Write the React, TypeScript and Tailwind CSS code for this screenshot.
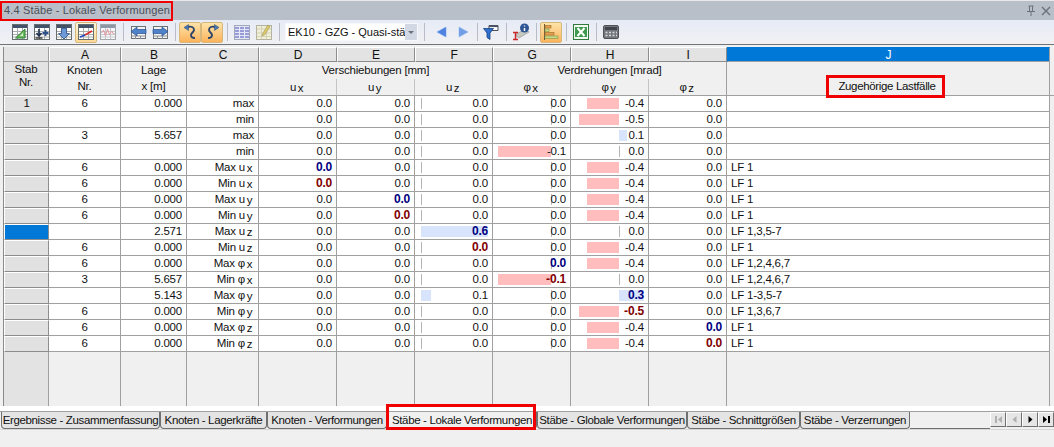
import React from 'react';

const cols =
  'grid grid-cols-[45px_72px_66px_72px_78px_78px_78px_78px_78px_78px_323px]';
const line = 'border-r border-b border-[#a0a0a0]';

type Sym = { base: string; sub: string };
type Val = { v: string; hi?: 'max' | 'min'; bar?: [number, number] };

interface Row {
  stab?: string;
  node?: string;
  x?: string;
  label: string;
  sym?: Sym;
  vals: Partial<Record<'d' | 'e' | 'f' | 'g' | 'h' | 'i', Val>>;
  lf?: string;
  selected?: boolean;
}

// bar = [left, width] in px inside the cell, zero ticks stay where the bar starts
const h4: Val = { v: '-0.4', bar: [16, 32] };
const row = (r: Partial<Row> & { label: string }): Row => ({ vals: {}, ...r });

const rows: Row[] = [
  row({ stab: '1', node: '6', x: '0.000', label: 'max', vals: { h: h4 } }),
  row({ label: 'min', vals: { h: { v: '-0.5', bar: [8, 40] } } }),
  row({ node: '3', x: '5.657', label: 'max', vals: { h: { v: '0.1', bar: [48, 8] } } }),
  row({ label: 'min', vals: { g: { v: '-0.1', bar: [5, 53] } } }),
  row({ node: '6', x: '0.000', label: 'Max', sym: { base: 'u', sub: 'x' }, vals: { d: { v: '0.0', hi: 'max' }, h: h4 }, lf: 'LF 1' }),
  row({ node: '6', x: '0.000', label: 'Min', sym: { base: 'u', sub: 'x' }, vals: { d: { v: '0.0', hi: 'min' }, h: h4 }, lf: 'LF 1' }),
  row({ node: '6', x: '0.000', label: 'Max', sym: { base: 'u', sub: 'y' }, vals: { e: { v: '0.0', hi: 'max' }, h: h4 }, lf: 'LF 1' }),
  row({ node: '6', x: '0.000', label: 'Min', sym: { base: 'u', sub: 'y' }, vals: { e: { v: '0.0', hi: 'min' }, h: h4 }, lf: 'LF 1' }),
  row({ x: '2.571', label: 'Max', sym: { base: 'u', sub: 'z' }, vals: { f: { v: '0.6', hi: 'max', bar: [6, 67] } }, lf: 'LF 1,3,5-7', selected: true }),
  row({ node: '6', x: '0.000', label: 'Min', sym: { base: 'u', sub: 'z' }, vals: { f: { v: '0.0', hi: 'min' }, h: h4 }, lf: 'LF 1' }),
  row({ node: '6', x: '0.000', label: 'Max', sym: { base: 'φ', sub: 'x' }, vals: { g: { v: '0.0', hi: 'max' }, h: h4 }, lf: 'LF 1,2,4,6,7' }),
  row({ node: '3', x: '5.657', label: 'Min', sym: { base: 'φ', sub: 'x' }, vals: { g: { v: '-0.1', hi: 'min', bar: [5, 53] } }, lf: 'LF 1,2,4,6,7' }),
  row({ x: '5.143', label: 'Max', sym: { base: 'φ', sub: 'y' }, vals: { f: { v: '0.1', bar: [6, 10] }, h: { v: '0.3', hi: 'max', bar: [48, 25] } }, lf: 'LF 1-3,5-7' }),
  row({ node: '6', x: '0.000', label: 'Min', sym: { base: 'φ', sub: 'y' }, vals: { h: { v: '-0.5', hi: 'min', bar: [8, 40] } }, lf: 'LF 1,3,6,7' }),
  row({ node: '6', x: '0.000', label: 'Max', sym: { base: 'φ', sub: 'z' }, vals: { h: h4, i: { v: '0.0', hi: 'max' } }, lf: 'LF 1' }),
  row({ node: '6', x: '0.000', label: 'Min', sym: { base: 'φ', sub: 'z' }, vals: { h: h4, i: { v: '0.0', hi: 'min' } }, lf: 'LF 1' }),
];

const tickAt: Record<string, number> = { f: 6, g: 58, h: 48 };

function SymText({ s }: { s: Sym }) {
  return (
    <span className="tracking-[1.5px]">
      {s.base}
      <span className="align-[-1px]">{s.sub}</span>
    </span>
  );
}

function NumCell({ id, val }: { id: 'd' | 'e' | 'f' | 'g' | 'h' | 'i'; val?: Val }) {
  const v = val ?? { v: '0.0' };
  const tick = tickAt[id];
  const neg = v.v.startsWith('-');
  return (
    <div className={`relative h-4 bg-white pr-[4px] text-right leading-[15px] ${line}`}>
      {v.bar ? (
        <span
          className={`absolute top-[2px] h-[11px] ${neg ? 'bg-[#ffbdbd]' : 'bg-[#d8e4fc]'}`}
          style={{ left: v.bar[0], width: v.bar[1] }}
        />
      ) : (
        tick !== undefined && (
          <span className="absolute top-[2px] h-[11px] w-px bg-[#b4b4b4]" style={{ left: tick }} />
        )
      )}
      <span
        className={`relative ${
          v.hi === 'max'
            ? 'text-[12px] font-bold text-[#000080]'
            : v.hi === 'min'
              ? 'text-[12px] font-bold text-[#800000]'
              : ''
        }`}
      >
        {v.v}
      </span>
    </div>
  );
}

function Letter({ ch, active }: { ch: string; active?: boolean }) {
  return (
    <div
      className={`h-[15px] border text-center text-[12px] leading-[14px] ${
        active
          ? 'border-[#0078d7] border-r-[#a0a0a0] border-b-[#a0a0a0] bg-[#0078d7] text-white'
          : 'border-t-white border-l-white border-r-[#8c8c8c] border-b-[#8c8c8c] bg-[#e3e3e3]'
      }`}
    >
      {ch}
    </div>
  );
}

function Btn({ children, active, soft }: { children: React.ReactNode; active?: boolean; soft?: boolean }) {
  return (
    <div
      className={`flex h-[21px] w-[22px] shrink-0 items-center justify-center rounded-[2px] ${
        active
          ? `border border-[#d8b77a] bg-linear-to-b ${soft ? 'from-[#fff6dc] to-[#fed896]' : 'from-[#fde3a8] to-[#fbb35a]'}`
          : ''
      }`}
    >
      {children}
    </div>
  );
}

function Sep({ w = 8 }: { w?: number }) {
  return (
    <div className="flex h-[18px] shrink-0 justify-center" style={{ width: w }}>
      <div className="h-full w-px bg-[#b7bcc6]" />
    </div>
  );
}

function Sheet({ children, tint = '#ffffff', faded }: { children?: React.ReactNode; tint?: string; faded?: boolean }) {
  return (
    <svg width="16" height="16" viewBox="0 0 16 16" opacity={faded ? 0.55 : 1}>
      <rect x="0.5" y="0.5" width="15" height="15" fill={tint} stroke="#666d6d" />
      <rect x="1" y="1" width="14" height="3" fill="#44516a" />
      <path d="M1 7.5h14M1 10.5h14M1 13h14M5.5 4v11M10.5 4v11" stroke="#a9adad" strokeWidth="1" />
      {children}
    </svg>
  );
}

function MoveIcon({ flip }: { flip?: boolean }) {
  return (
    <svg width="17" height="15" viewBox="0 0 17 15">
      <rect x="1.5" y="1.5" width="14" height="12" fill="#f3f3f3" stroke="#6e7274" />
      <path d="M1 11h15M5.5 11v3M10.5 11v3" stroke="#8a8e90" />
      <path
        d={flip ? 'M1 4.5h9V2l6 4.5L10 11V8.5H1z' : 'M16 4.5H7V2L1 6.5 7 11V8.5h9z'}
        fill="#4f82c9"
        stroke="#27508f"
        strokeWidth="0.7"
      />
    </svg>
  );
}

function CurveIcon({ flip }: { flip?: boolean }) {
  return (
    <svg width="15" height="18" viewBox="0 0 15 18" style={flip ? { transform: 'scaleX(-1)' } : undefined}>
      <path d="M5 4c3-1 6 0 6 3 0 2-3 3-3 5 0 2 2 3 4 3" fill="none" stroke="#2f4668" strokeWidth="1.9" />
      <path d="M1 4.500l4.500-3v6z" fill="#4678b8" stroke="#2f4668" strokeWidth="0.5" />
    </svg>
  );
}

function Toolbar() {
  return (
    <div className="flex h-[25px] items-center border-b border-[#70757c] bg-linear-to-b from-[#e6ebf6] to-[#f1f1f3] pl-[9px]">
      <Btn>
        <Sheet>
          <path d="M3.5 14L13 5v9z" fill="#6fbf5e" stroke="#2f7d34" />
          <path d="M8 12l3-3v3z" fill="#d9efd3" />
        </Sheet>
      </Btn>
      <Btn>
        <Sheet>
          <path d="M5 5v6M2.5 9L5 12l2.5-3" fill="none" stroke="#20314e" strokeWidth="1.6" />
          <path d="M1.5 14h7" stroke="#111" strokeWidth="1.2" />
          <path d="M11.5 6v6M8.5 9h6" stroke="#2a4f8a" strokeWidth="1.8" />
        </Sheet>
      </Btn>
      <Btn>
        <Sheet>
          <path d="M5.5 4.5h5v5h3L8 15 2.5 9.5h3z" fill="#6d9ad6" stroke="#2c4f85" strokeWidth="0.8" />
        </Sheet>
      </Btn>
      <Btn active soft>
        <Sheet>
          <path d="M2 13l5-2" stroke="#2246c2" strokeWidth="1.6" />
          <path d="M7 11l7-4" stroke="#d92b2b" strokeWidth="1.6" />
        </Sheet>
      </Btn>
      <Btn>
        <Sheet faded>
          <path d="M1.5 9l2-3 2 6 2-7 2 6 2-4 2 3 1-1" fill="none" stroke="#e0565b" strokeWidth="1" />
        </Sheet>
      </Btn>
      <Sep />
      <Btn>
        <MoveIcon />
      </Btn>
      <Btn>
        <MoveIcon flip />
      </Btn>
      <Sep />
      <Btn active>
        <CurveIcon />
      </Btn>
      <Btn active>
        <CurveIcon flip />
      </Btn>
      <Sep />
      <Btn>
        <svg width="16" height="15" viewBox="0 0 16 15" opacity="0.75">
          <rect x="0.5" y="0.5" width="15" height="14" fill="#dfe3f5" stroke="#8c90a8" />
          <path d="M1 3h14M1 6h14M1 9h14M1 12h14" stroke="#5d63c4" strokeWidth="1.4" />
          <path d="M5.5 1v13M10.5 1v13" stroke="#e7e9f7" />
        </svg>
      </Btn>
      <Btn>
        <svg width="16" height="16" viewBox="0 0 16 16" opacity="0.8">
          <rect x="0.5" y="1.5" width="15" height="14" fill="#f2efcf" stroke="#a5a58c" />
          <path d="M1 5h14M1 9h14M1 12.5h14M5.5 2v13M10.5 2v13" stroke="#cfcdaa" />
          <path d="M6 12l1-3 5-8 2 1.5-5 8z" fill="#d9c24a" stroke="#8d7d2c" strokeWidth="0.6" />
        </svg>
      </Btn>
      <Sep />
      <div className="ml-[2px] flex h-[18px] w-[133px] shrink-0 border border-[#f7f8fb] bg-white">
        <span className="flex-1 whitespace-nowrap pl-[2px] text-[11px] leading-[16px] tracking-normal">
          EK10 - GZG - Quasi-stä
        </span>
        <span className="flex w-[14px] items-center justify-center bg-[#d3d9e4]">
          <span className="h-0 w-0 border-x-[3px] border-t-[3px] border-x-transparent border-t-[#6d7178]" />
        </span>
      </div>
      <Sep w={12} />
      <Btn>
        <svg width="11" height="12" viewBox="0 0 11 12">
          <path d="M10 1v10L1 6z" fill="#4f82e0" stroke="#6fa0ee" strokeWidth="0.6" />
        </svg>
      </Btn>
      <Btn>
        <svg width="11" height="12" viewBox="0 0 11 12">
          <path d="M1 1v10l9-5z" fill="#6f9ee6" stroke="#8fb4ee" strokeWidth="0.6" />
        </svg>
      </Btn>
      <Sep w={6} />
      <Btn>
        <svg width="16" height="16" viewBox="0 0 16 16">
          <path d="M6 1.500h9v5H6z" fill="#fff" stroke="#4d4f55" />
          <path d="M6 1.500h9v1.600H6z" fill="#4d5568" />
          <path d="M0.500 4.500h10L7 9v6.500L4 13.500V9z" fill="#2f6fd0" stroke="#17417f" strokeWidth="0.8" />
        </svg>
      </Btn>
      <Sep />
      <Btn>
        <svg width="18" height="18" viewBox="0 0 18 18">
          <path d="M3 12l10-6 4 3-10 6z" fill="#c8c8c2" stroke="#8f8f88" strokeWidth="0.6" />
          <path d="M1 9.500h5M1 16.500h5M3.500 9.500v7" stroke="#c9282d" strokeWidth="1.5" />
          <circle cx="12.500" cy="5" r="4.500" fill="#2e5596" />
          <path d="M12.500 2.500v1M12.500 5v3" stroke="#fff" strokeWidth="1.500" />
        </svg>
      </Btn>
      <Sep w={8} />
      <Btn active>
        <svg width="15" height="16" viewBox="0 0 15 16">
          <path d="M0.500 0v16" stroke="#6b5a3a" />
          <rect x="1" y="1.500" width="6" height="2.500" fill="#e8a04b" stroke="#9a6a2c" strokeWidth="0.6" />
          <rect x="1" y="5" width="4" height="2.500" fill="#c7d98a" stroke="#7e8f3e" strokeWidth="0.6" />
          <rect x="1" y="8.500" width="9" height="2.500" fill="#e8a04b" stroke="#9a6a2c" strokeWidth="0.6" />
          <rect x="1" y="12" width="13" height="2.500" fill="#c7d98a" stroke="#7e8f3e" strokeWidth="0.6" />
        </svg>
      </Btn>
      <Sep w={8} />
      <Btn>
        <svg width="16" height="16" viewBox="0 0 16 16">
          <rect x="0.500" y="0.500" width="15" height="15" fill="#f4f8f2" stroke="#2f7a3a" />
          <rect x="2" y="3" width="12" height="10" fill="#3e9a4e" />
          <path d="M4.500 4l7 8M11.500 4l-7 8" stroke="#fff" strokeWidth="2" />
        </svg>
      </Btn>
      <Sep w={8} />
      <Btn>
        <svg width="16" height="14" viewBox="0 0 16 14">
          <rect x="0.500" y="0.500" width="15" height="13" rx="1.500" fill="#74787e" stroke="#50535a" />
          <rect x="2" y="2" width="12" height="3" fill="#42464c" />
          <path d="M2.500 7.500h2M6 7.500h2M9.500 7.500h2M13 7.500h1M2.500 10.500h2M6 10.500h2M9.500 10.500h2M13 10.500h1" stroke="#d6d8dc" strokeWidth="1.400" />
        </svg>
      </Btn>
    </div>
  );
}

function Header() {
  const top = 'bg-[#f0f0f0] text-center';
  return (
    <div className="border-b border-[#a0a0a0]">
      <div className={cols}>
        <div className="border-r border-b border-[#a0a0a0] bg-[#e3e3e3]" />
        {['A', 'B', 'C', 'D', 'E', 'F', 'G', 'H', 'I'].map((c) => (
          <Letter key={c} ch={c} />
        ))}
        <Letter ch="J" active />
      </div>
      <div className={`${cols} grid-rows-[17px_16px] leading-[16px]`}>
        <div className="row-span-2 border-r border-[#a0a0a0] bg-[#e3e3e3] pt-[1px] text-center leading-[13px]">
          <div>Stab</div>
          <div>Nr.</div>
        </div>
        <div className={`row-span-2 border-r border-[#a0a0a0] ${top}`}>
          <div>Knoten</div>
          <div>Nr.</div>
        </div>
        <div className={`row-span-2 border-r border-[#a0a0a0] ${top}`}>
          <div>Lage</div>
          <div>x [m]</div>
        </div>
        <div className={`row-span-2 border-r border-[#a0a0a0] ${top}`} />
        <div className={`col-span-3 border-r border-[#a0a0a0] ${top}`}>Verschiebungen [mm]</div>
        <div className={`col-span-3 border-r border-[#a0a0a0] ${top}`}>Verdrehungen [mrad]</div>
        <div className="row-span-2 border-r border-[#a0a0a0] bg-[#f0f0f0]" />
        {[
          ['u', 'x'],
          ['u', 'y'],
          ['u', 'z'],
          ['φ', 'x'],
          ['φ', 'y'],
          ['φ', 'z'],
        ].map(([base, sub], i) => (
          <div key={base + sub} className={`${top} ${i === 2 || i === 5 ? 'border-r border-[#a0a0a0]' : 'border-r border-[#c4c4c4]'}`}>
            <SymText s={{ base, sub }} />
          </div>
        ))}
      </div>
    </div>
  );
}

const tabs = [
  { label: 'Ergebnisse - Zusammenfassung', w: 'w-[159px]' },
  { label: 'Knoten - Lagerkräfte', w: 'w-[107px]' },
  { label: 'Knoten - Verformungen', w: 'w-[120px]' },
  { label: 'Stäbe - Lokale Verformungen', w: 'w-[150px]', active: true },
  { label: 'Stäbe - Globale Verformungen', w: 'w-[150px]' },
  { label: 'Stäbe - Schnittgrößen', w: 'w-[113px]' },
  { label: 'Stäbe - Verzerrungen', w: 'w-[110px]' },
];

function NavBtn({ kind, off }: { kind: 'first' | 'prev' | 'next' | 'last'; off?: boolean }) {
  const c = off ? '#b0b0b0' : '#000000';
  return (
    <div className="flex h-[15px] w-[16px] items-center justify-center border border-t-white border-l-white border-r-[#6f6f6f] border-b-[#6f6f6f] bg-[#e6e6e6]">
      <svg width="9" height="9" viewBox="0 0 9 9">
        {kind === 'first' && <path d="M1 1h2v7H1zM8 1v7L4 4.500z" fill={c} />}
        {kind === 'prev' && <path d="M6.500 1v7l-4-3.500z" fill={c} />}
        {kind === 'next' && <path d="M2.500 1v7l4-3.500z" fill={c} />}
        {kind === 'last' && <path d="M1 1v7l4-3.500zM6 1h2v7H6z" fill={c} />}
      </svg>
    </div>
  );
}

export default function App() {
  return (
    <div className="relative h-[447px] w-[1054px] overflow-hidden bg-[#f0f0f0] font-['Liberation_Sans',Arial,sans-serif] text-[11.5px] tracking-[-0.2px] text-[#111]">
      {/* Title bar */}
      <div className="flex h-[20px] items-center justify-between border-t border-[#e8e8e8] bg-[#b9bfc9]">
        <div className="flex h-[20px] w-[173px] items-center whitespace-nowrap border-2 border-[#f00000] pl-[2px] text-[11px] tracking-[0.15px] text-[#4b5058]">
          4.4 Stäbe - Lokale Verformungen
        </div>
        <div className="flex items-center gap-[5px] pr-[3px]">
          <svg width="10" height="11" viewBox="0 0 10 11">
            <path d="M2.500 1h5M3.500 1v5M6.500 1v5M1 6.500h8M5 6.500V11" stroke="#6b7079" fill="none" />
          </svg>
          <svg width="10" height="10" viewBox="0 0 10 10">
            <path d="M1 1l8 8M9 1l-8 8" stroke="#6b7079" strokeWidth="1.400" />
          </svg>
        </div>
      </div>

      <Toolbar />

      {/* Table */}
      <div className="ml-[3px] mt-[2px] border-l border-[#8a8a8a]">
        <Header />
        {rows.map((r, i) => (
          <div key={i} className={cols}>
            <div
              className={`h-4 border border-t-white border-l-white border-r-[#8c8c8c] border-b-[#8c8c8c] text-center leading-[13px] ${
                r.selected ? 'bg-[#0078d7]' : 'bg-[#e1e1e1]'
              }`}
            >
              {r.stab}
            </div>
            <div className={`h-4 bg-white text-center leading-[14px] ${line}`}>{r.node}</div>
            <div className={`h-4 bg-white pr-[4px] text-right leading-[15px] ${line}`}>{r.x}</div>
            <div className={`h-4 bg-white pr-[4px] text-right leading-[14px] ${line}`}>
              {r.label}
              {r.sym && (
                <>
                  {' '}
                  <SymText s={r.sym} />
                </>
              )}
            </div>
            {(['d', 'e', 'f', 'g', 'h', 'i'] as const).map((k) => (
              <NumCell key={k} id={k} val={r.vals[k]} />
            ))}
            <div className={`h-4 bg-white pl-[4px] leading-[15px] ${line}`}>{r.lf}</div>
          </div>
        ))}
        <div className={`${cols} h-[54px]`}>
          <div className="border-r border-[#a0a0a0] bg-[#e3e3e3]" />
          {Array.from({ length: 10 }).map((_, i) => (
            <div key={i} className="border-r border-[#a0a0a0] bg-[#f0f0f0]" />
          ))}
        </div>
      </div>

      {/* Tab strip */}
      <div className="h-[5px] bg-white" />
      <div className="flex h-[18px] items-stretch border-t border-[#a0a0a0] pl-[1px]">
        {tabs.map((t) => (
          <div
            key={t.label}
            className={`${t.w} h-[17px] shrink-0 whitespace-nowrap rounded-b-[4px] border-x border-b border-[#6f6f6f] text-center leading-[16px] tracking-[-0.35px] ${
              t.active ? 'bg-[#f0f0f0]' : 'bg-[#e4e4e4]'
            }`}
          >
            {t.label}
          </div>
        ))}
        <div className="h-[17px] flex-1 border-b border-[#6f6f6f]" />
        <div className="flex h-[17px] items-start bg-[#f0f0f0]">
          <NavBtn kind="first" off />
          <NavBtn kind="prev" off />
          <NavBtn kind="next" />
          <NavBtn kind="last" />
        </div>
      </div>
      <div className="h-px bg-[#d8d8d8]" />

      {/* Highlight frames */}
      <div className="absolute left-[826px] top-[75px] flex h-[23px] w-[119px] items-center justify-center border-[3px] border-[#f00000] bg-[#f0f0f0] pl-[3px] tracking-[-0.35px]">
        Zugehörige Lastfälle
      </div>
      <div className="absolute left-[386px] top-[404px] h-[26px] w-[150px] border-[3px] border-[#f00000]" />
    </div>
  );
}
